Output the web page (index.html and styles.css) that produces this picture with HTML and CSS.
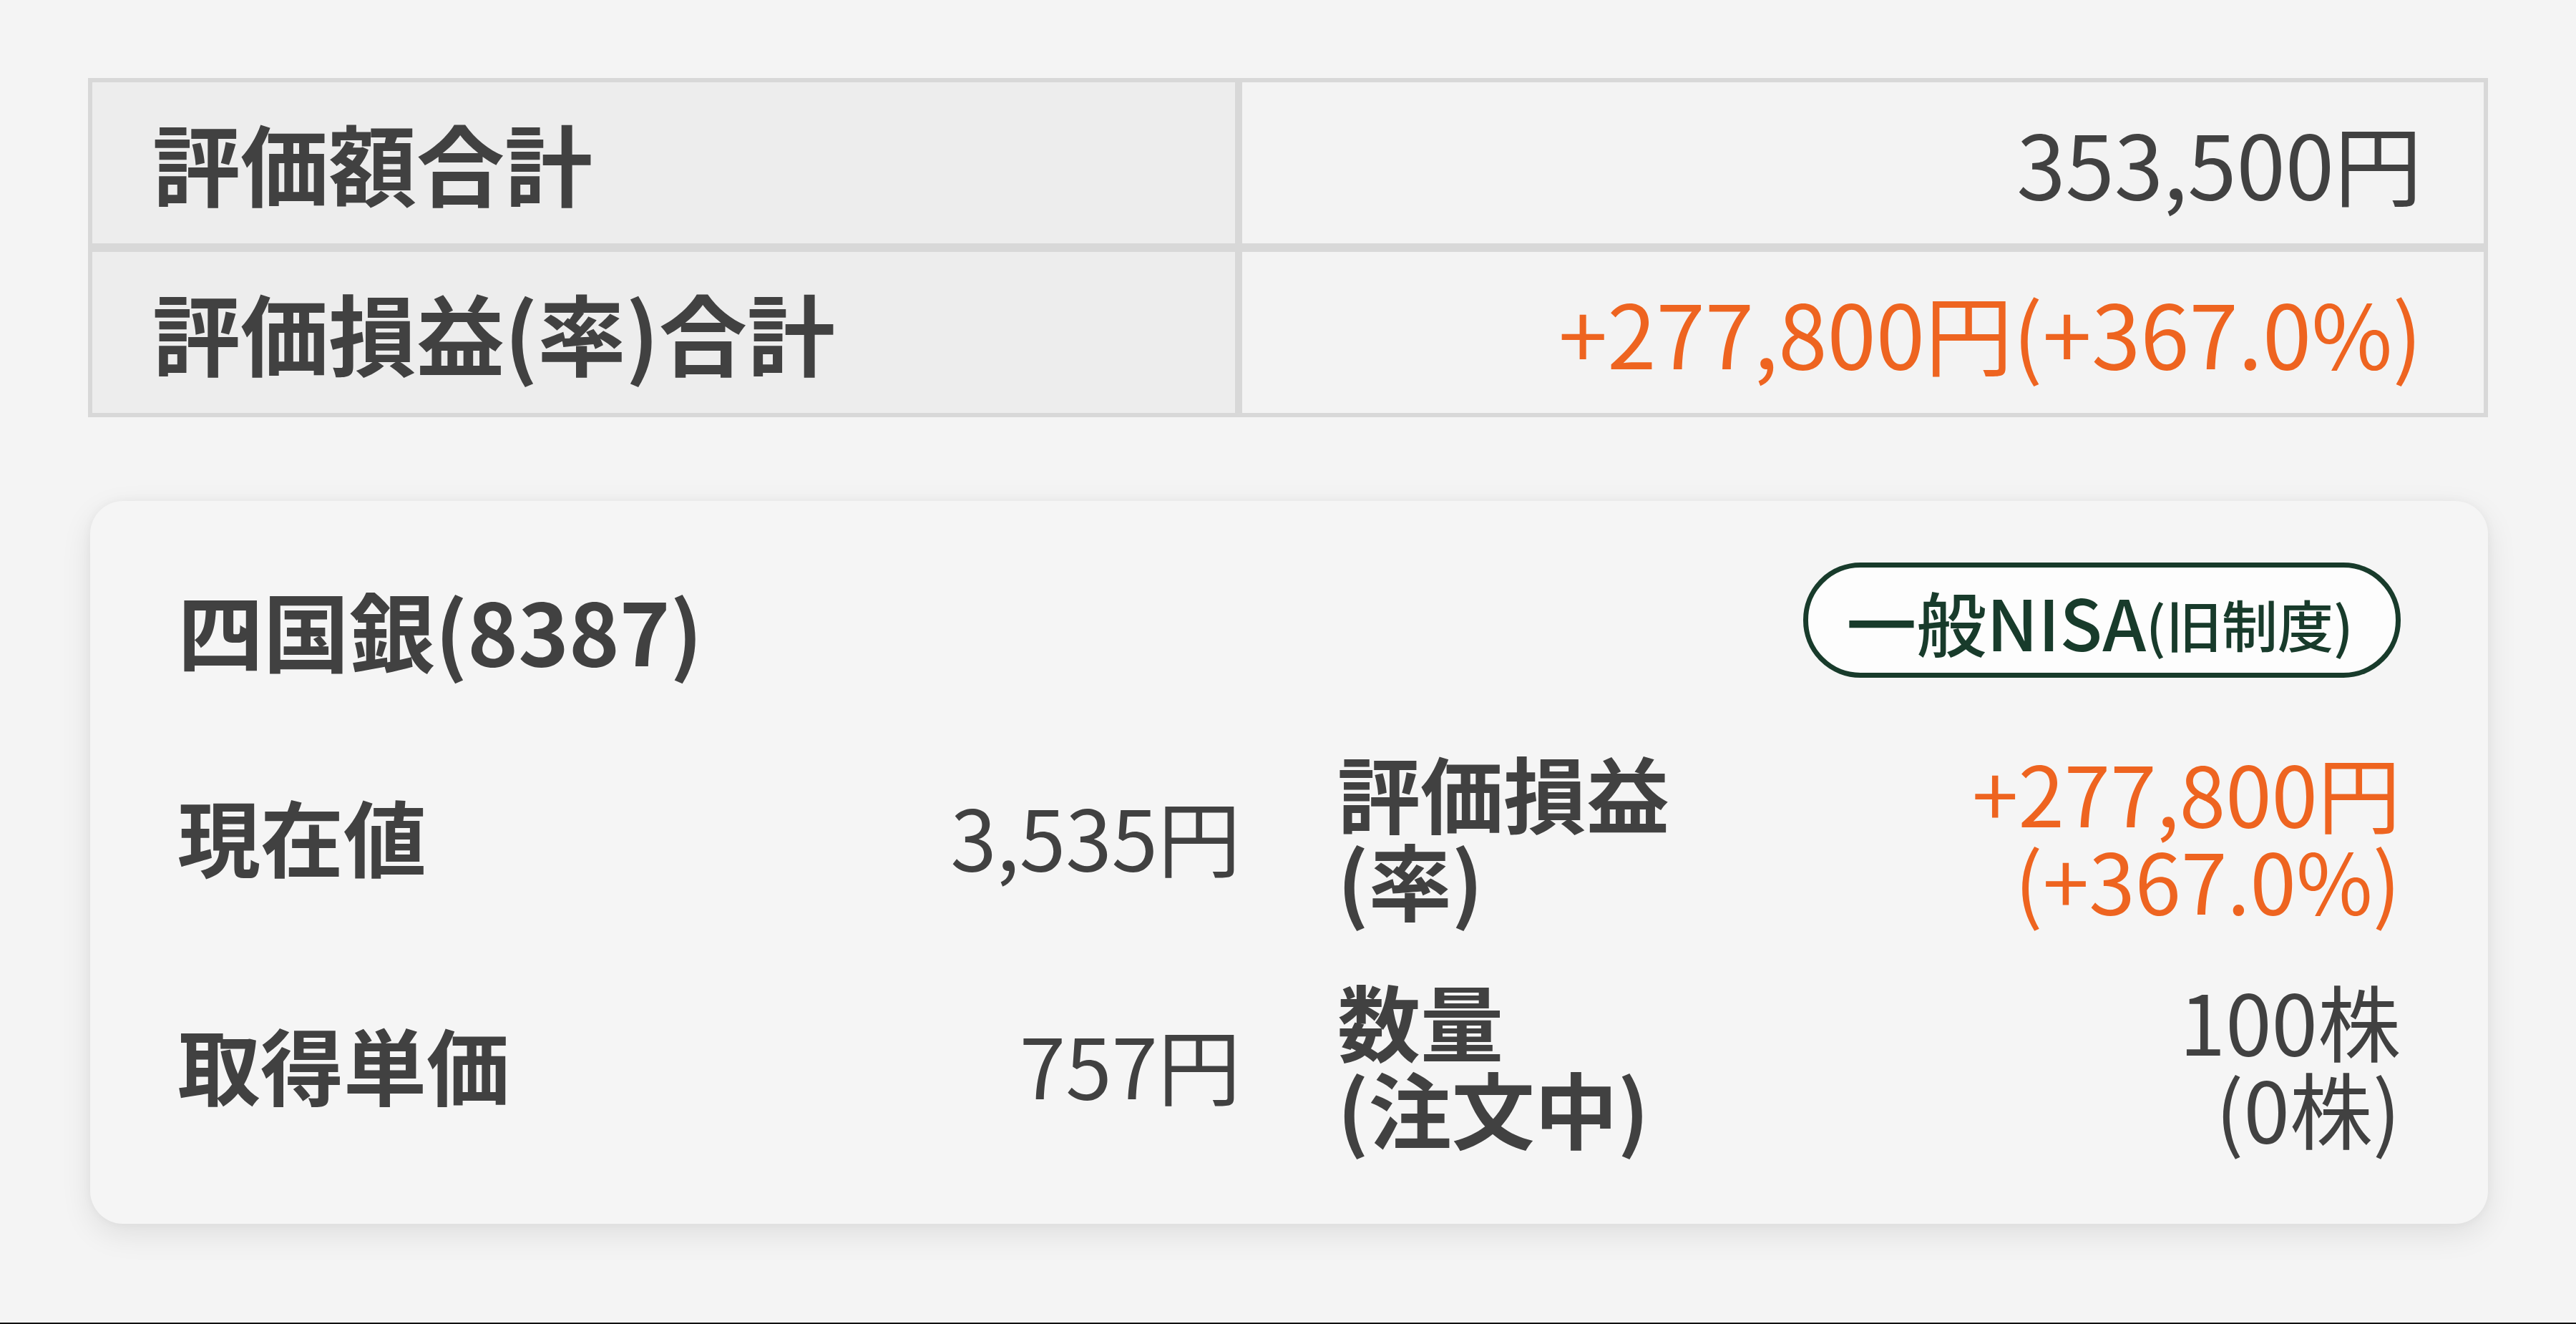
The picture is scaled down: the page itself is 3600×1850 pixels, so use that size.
FILE: index.html
```html
<!DOCTYPE html>
<html lang="ja">
<head>
<meta charset="utf-8">
<title>保有銘柄</title>
<link rel="stylesheet" href="styles.css">
</head>
<body>
<div class="screen">
  <div class="summary">
    <div class="cell label">評価額合計</div>
    <div class="cell value">353,500円</div>
    <div class="cell label">評価損益(率)合計</div>
    <div class="cell value plus">+277,800円(+367.0%)</div>
  </div>

  <div class="card">
    <div class="card-head">
      <div class="name">四国銀(8387)</div>
      <div class="badge"><span class="badge-main">一般NISA</span><span class="badge-sub">(旧制度)</span></div>
    </div>
    <div class="rows">
      <div class="item">
        <div class="k">現在値</div>
        <div class="v">3,535円</div>
      </div>
      <div class="item">
        <div class="k">評価損益<br>(率)</div>
        <div class="v plus">+277,800円<br>(+367.0%)</div>
      </div>
      <div class="item">
        <div class="k">取得単価</div>
        <div class="v">757円</div>
      </div>
      <div class="item">
        <div class="k">数量<br>(注文中)</div>
        <div class="v">100株<br>(0株)</div>
      </div>
    </div>
  </div>

  <div class="bottom-edge"></div>
</div>
</body>
</html>
```

FILE: styles.css
```css
html, body {
  margin: 0;
  padding: 0;
}
body {
  background: #f4f4f4;
  font-family: "Noto Sans CJK JP", "Noto Sans", sans-serif;
  color: #414141;
}
.screen {
  height: 100vh;
  display: flex;
  flex-direction: column;
  padding: 109px 123px 0;
  box-sizing: border-box;
}
.summary {
  display: grid;
  grid-template-columns: 1608px 1fr;
  grid-auto-rows: 237px;
}
.cell {
  border: 6px solid #d8d8d8;
  display: flex;
  align-items: center;
  font-size: 123px;
  line-height: 1;
  padding: 0 86px 4px 84px;
}
.cell.label {
  background: #ededed;
  font-weight: 700;
  border-right-width: 5px;
}
.cell.value {
  background: #f3f3f3;
  justify-content: flex-end;
  font-weight: 400;
  border-left-width: 5px;
}
.plus {
  color: #ee6420;
}
.card {
  margin-top: 117px;
  background: #f5f5f5;
  border-radius: 46px;
  box-shadow: 0 14px 44px rgba(0, 0, 0, 0.09), 0 0 14px rgba(0, 0, 0, 0.04);
  padding: 86px 122px 101px 122px;
  margin-left: 3px;
}
.card-head {
  display: flex;
  justify-content: space-between;
  align-items: center;
  height: 161px;
}
.name {
  font-size: 120px;
  font-weight: 700;
  line-height: 1;
  margin-top: 24px;
}
.badge {
  box-sizing: border-box;
  height: 161px;
  width: 835px;
  border: 7px solid #183b2b;
  border-radius: 80px;
  background: #fdfdfd;
  color: #183b2b;
  display: flex;
  align-items: center;
  justify-content: center;
  padding-right: 6px;
  line-height: 1;
}
.badge-main {
  font-size: 98px;
  font-weight: 500;
}
.badge-sub {
  font-size: 78px;
  font-weight: 500;
  margin-top: 8px;
}
.rows {
  margin-top: 95px;
  display: grid;
  grid-template-columns: 1fr 1fr;
  column-gap: 135px;
  row-gap: 71px;
}
.item {
  display: flex;
  justify-content: space-between;
  align-items: center;
  min-height: 248px;
  font-size: 116px;
  line-height: 122px;
}
.k {
  font-weight: 700;
}
.v {
  text-align: right;
  font-weight: 400;
}
.bottom-edge {
  margin-top: auto;
  margin-left: -123px;
  margin-right: -123px;
  height: 2px;
  background: #111;
}
```
